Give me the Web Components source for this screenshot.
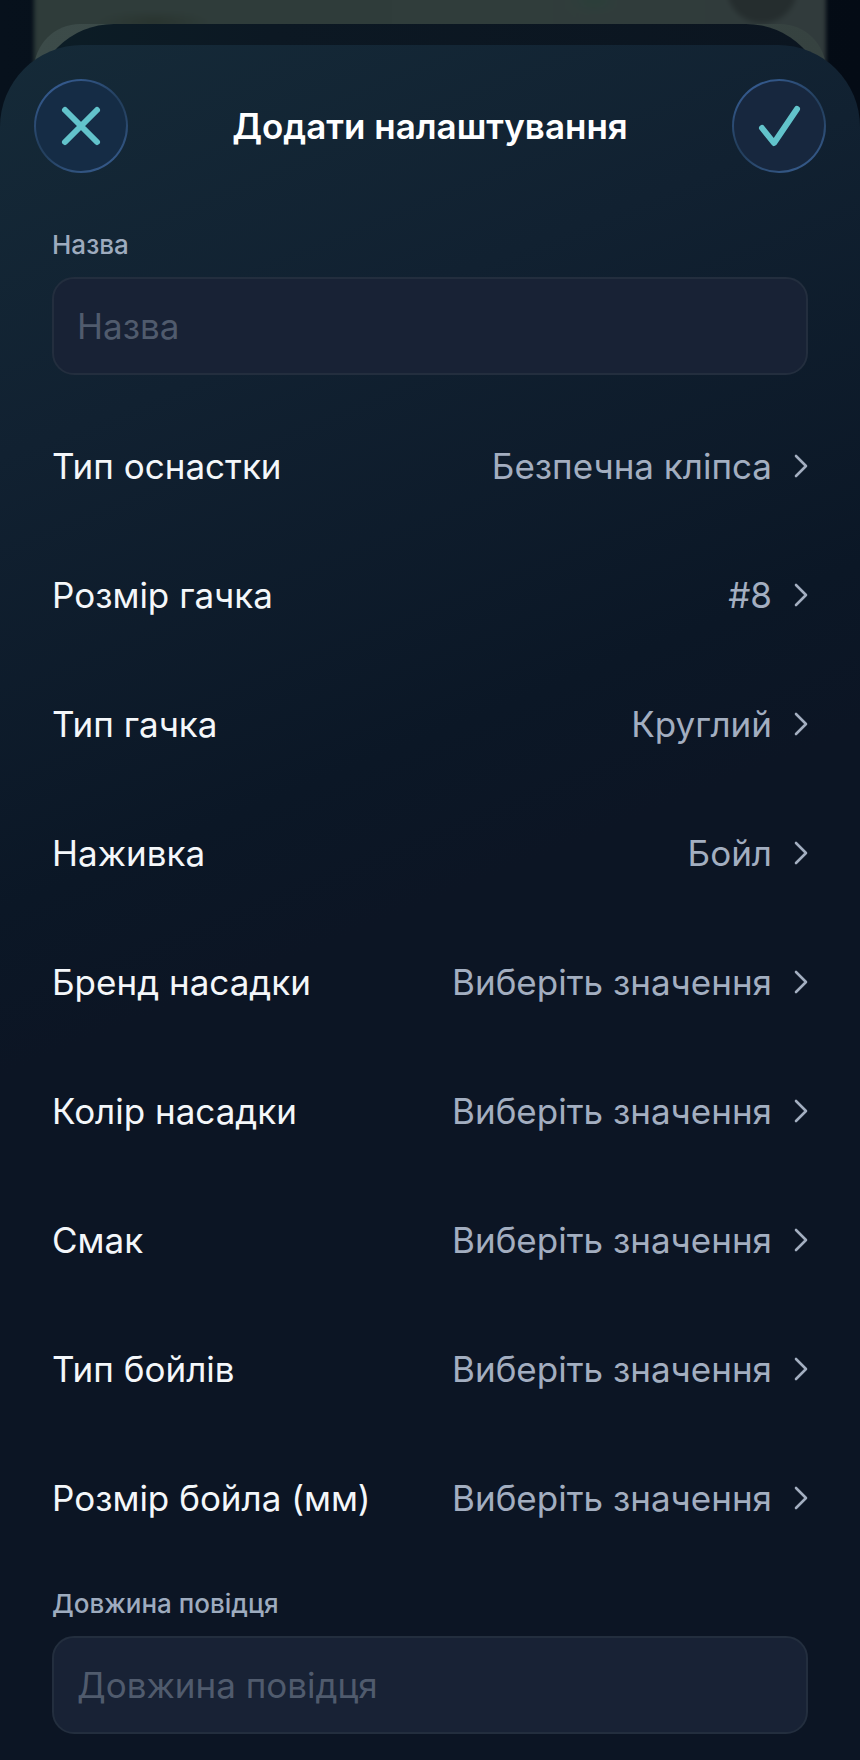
<!DOCTYPE html>
<html lang="uk">
<head>
<meta charset="utf-8">
<meta name="viewport" content="width=device-width, initial-scale=1">
<title>Додати налаштування</title>
<style>
    html, body {
        margin: 0;
        min-height: 100%;
        background: #050d17;
    }
    body {
        font-family: Inter, "Noto Sans", sans-serif;
        color: #f4f7fa;
    }
</style>
</head>
<body>

<modal-sheet>
    <sheet-header slot="header">Додати налаштування</sheet-header>
    <text-field label="Назва"></text-field>
    <option-list>
        <option-row value="Безпечна кліпса">Тип оснастки</option-row>
        <option-row value="#8">Розмір гачка</option-row>
        <option-row value="Круглий">Тип гачка</option-row>
        <option-row value="Бойл">Наживка</option-row>
        <option-row>Бренд насадки</option-row>
        <option-row>Колір насадки</option-row>
        <option-row>Смак</option-row>
        <option-row>Тип бойлів</option-row>
        <option-row>Розмір бойла (мм)</option-row>
    </option-list>
    <text-field label="Довжина повідця"></text-field>
</modal-sheet>

<script>
class ModalSheet extends HTMLElement {

    constructor() {
        super()
        this.shadowDOM = this.attachShadow({mode : "open"})
    }

    connectedCallback() {
        this.render()
    }

    render() {
        this.shadowDOM.innerHTML = `
            <style>
            :host {
                display: flex;
                position: relative;
                box-sizing: border-box;
                min-height: 100vh;
                padding-top: 45px;
                overflow: hidden;
                background: linear-gradient(90deg, #07111c, #040b15);
            }
            /* dimmed map and the two cards under the sheet */
            .map, .card {
                position: absolute;
                left: 34px;
                right: 34px;
            }
            .map {
                top: -20px;
                height: 100px;
                background:
                    radial-gradient(circle 38px at calc(100% - 64px) 8px, #252d2e 85%, transparent),
                    radial-gradient(ellipse 60px 12px at 120px 42px, #29342f, transparent),
                    radial-gradient(ellipse 26px 16px at 560px 20px, #2b3f3a, transparent),
                    linear-gradient(90deg, #2f3c3a, #303d3b 60%, #313b3c);
                filter: blur(2px);
            }
            .card {
                top: 24px;
                height: 120px;
            }
            .light {
                border-radius: 46px 46px 0 0;
                background: linear-gradient(90deg, #3c4b49, #364240);
            }
            .dark {
                border-radius: 80px 80px 0 0;
                background: linear-gradient(90deg, #0c1d26, #0c1823 30%, #0b1520);
            }
            .sheet {
                position: relative;
                flex: 1;
                min-width: 0;
                padding: 34px 34px 26px;
                border-radius: 82px 82px 0 0;
                background: linear-gradient(158deg, #152a38, #112131 20%, #0b1726 42%, #0c1524 50%);
            }
            .content {
                display: flex;
                flex-direction: column;
                gap: 26px;
                margin-top: 56px;
                padding: 0 18px;
            }
            </style>

            <div class="map"></div>
            <div class="card light"></div>
            <div class="card dark"></div>
            <main class="sheet">
                <slot name="header"></slot>
                <div class="content"><slot></slot></div>
            </main>
        `
    }

}
customElements.define("modal-sheet", ModalSheet)

class SheetHeader extends HTMLElement {

    constructor() {
        super()
        this.shadowDOM = this.attachShadow({mode : "open"})
    }

    connectedCallback() {
        this.render()
    }

    render() {
        this.shadowDOM.innerHTML = `
            <style>
            :host {
                display: block;
            }
            header {
                display: flex;
                align-items: center;
                justify-content: space-between;
            }
            h1 {
                margin: 0;
                font-size: 35px;
                line-height: 44px;
                font-weight: 600;
                color: #fff;
            }
            button {
                box-sizing: border-box;
                width: 94px;
                height: 94px;
                padding: 0;
                border: 2px solid transparent;
                border-radius: 50%;
                background:
                    linear-gradient(var(--fill), var(--fill)) padding-box,
                    linear-gradient(150deg, #3b64a0, #24405f 45%, #24405f 55%, #3b6298) border-box;
                cursor: pointer;
            }
            .close {
                --fill: #152c45;
            }
            .done {
                --fill: #17273e;
            }
            svg {
                display: block;
                margin: auto;
                fill: none;
                stroke: #62c3cb;
                stroke-width: 6;
                stroke-linecap: round;
                stroke-linejoin: round;
            }
            </style>

            <header>
                <button class="close" type="button" aria-label="Закрити">
                    <svg width="44" height="44" viewBox="0 0 44 44"><path d="M6 6l32 32M38 6L6 38"/></svg>
                </button>
                <h1><slot></slot></h1>
                <button class="done" type="button" aria-label="Зберегти">
                    <svg width="44" height="44" viewBox="0 0 44 44"><path d="M5 24l12 15L40 5"/></svg>
                </button>
            </header>
        `
    }

}
customElements.define("sheet-header", SheetHeader)

class TextField extends HTMLElement {

    constructor() {
        super()
        this.shadowDOM = this.attachShadow({mode : "open"})
    }

    connectedCallback() {
        this.render()
    }

    render() {
        const label = this.getAttribute("label")
        this.shadowDOM.innerHTML = `
            <style>
            :host {
                display: flex;
                flex-direction: column;
                gap: 16px;
            }
            label {
                font-size: 26px;
                line-height: 32px;
                font-weight: 500;
                color: #9eabbe;
            }
            input {
                box-sizing: border-box;
                width: 100%;
                height: 98px;
                padding: 0 23px;
                border: 2px solid #232e3e;
                border-radius: 22px;
                background: #182235;
                color: #f4f7fa;
                font-family: inherit;
                font-size: 35px;
            }
            input::placeholder {
                color: #505b6d;
                opacity: 1;
            }
            </style>

            <label for="field">${label}</label>
            <input id="field" type="text" placeholder="${label}">
        `
    }

}
customElements.define("text-field", TextField)

class OptionList extends HTMLElement {

    constructor() {
        super()
        this.shadowDOM = this.attachShadow({mode : "open"})
    }

    connectedCallback() {
        this.render()
    }

    render() {
        this.shadowDOM.innerHTML = `
            <style>
            :host {
                display: flex;
                flex-direction: column;
            }
            </style>
            <slot></slot>
        `
    }

}
customElements.define("option-list", OptionList)

class OptionRow extends HTMLElement {

    constructor() {
        super()
        this.shadowDOM = this.attachShadow({mode : "open"})
    }

    connectedCallback() {
        this.render()
    }

    render() {
        const value = this.getAttribute("value") || "Виберіть значення"
        this.shadowDOM.innerHTML = `
            <style>
            :host {
                display: block;
            }
            button {
                display: flex;
                align-items: center;
                width: 100%;
                height: 129px;
                padding: 0;
                border: 0;
                background: none;
                color: inherit;
                font-family: inherit;
                font-size: 35px;
                line-height: 44px;
                text-align: left;
                cursor: pointer;
            }
            .name {
                flex: 1;
            }
            .value {
                color: #a3aec0;
            }
            svg {
                margin-left: 22px;
                fill: none;
                stroke: #a3aec0;
                stroke-width: 2.6;
                stroke-linecap: round;
                stroke-linejoin: round;
            }
            </style>

            <button type="button">
                <span class="name"><slot></slot></span>
                <span class="value">${value}</span>
                <svg width="14" height="24" viewBox="0 0 14 24"><path d="M2 2l10 10L2 22"/></svg>
            </button>
        `
    }

}
customElements.define("option-row", OptionRow)
</script>
</body>
</html>
